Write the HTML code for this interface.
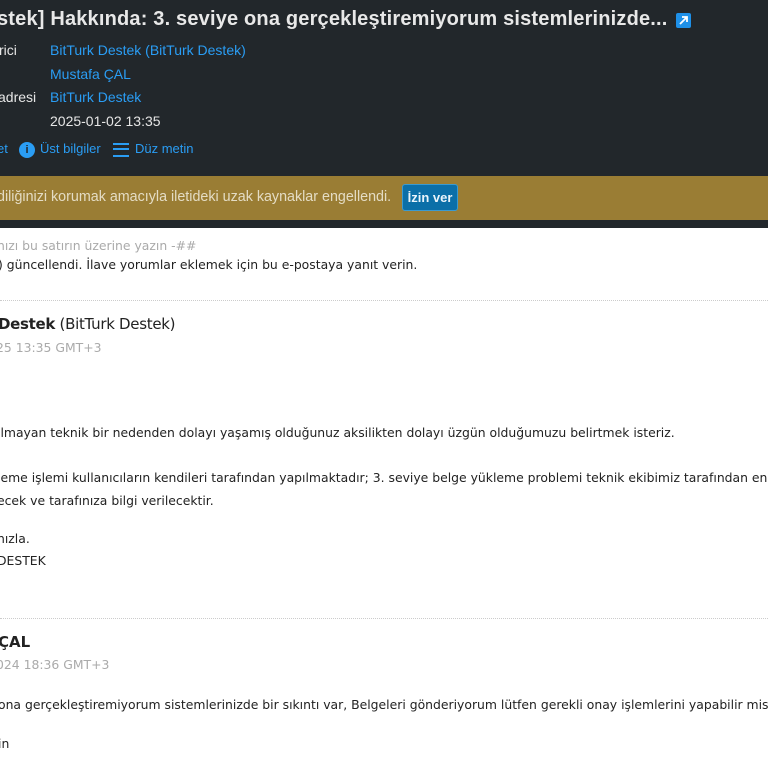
<!DOCTYPE html>
<html><head><meta charset="utf-8"><style>
*{margin:0;padding:0;box-sizing:border-box}
body{width:768px;height:768px;overflow:hidden;background:#fff;position:relative;font-family:"Liberation Sans",sans-serif}
.hd{position:absolute;left:0;top:0;width:768px;height:228px;background:#22272b}
.t{position:absolute;white-space:nowrap}
.ban{position:absolute;left:0;top:176px;width:768px;height:44px;background:#9a7d34}
.b{font-family:"DejaVu Sans",sans-serif;font-size:12.4px;color:#222}
.g{color:#aaa}
.hr{position:absolute;left:0;width:768px;border-top:1px dotted #ccc}
.lnk{color:#2a9df4;font-size:14px}
.w{color:#e6e6e6;font-size:14px}
</style></head><body>
<div class="hd"></div>
<div class="t" style="left:-3px;top:8px;font-size:20px;font-weight:bold;color:#e8e8e8;letter-spacing:0.18px">stek] Hakkında: 3. seviye ona gerçekleştiremiyorum sistemlerinizde...</div>
<div style="position:absolute;left:676px;top:13px;width:15px;height:15px;background:#1e90e8;border-radius:2px"><svg width="15" height="15"><path d="M4 11L11 4M6 4h5v5" stroke="#fff" stroke-width="1.8" fill="none"/></svg></div>
<div class="t w" style="left:-1px;top:42px">rici</div>
<div class="t lnk" style="left:50px;top:42px">BitTurk Destek (BitTurk Destek)</div>
<div class="t lnk" style="left:50px;top:66px">Mustafa ÇAL</div>
<div class="t w" style="left:-2px;top:89px">adresi</div>
<div class="t lnk" style="left:50px;top:89px">BitTurk Destek</div>
<div class="t w" style="left:50px;top:113px">2025-01-02 13:35</div>
<div class="t lnk" style="left:-3px;top:141px;font-size:13px">et</div>
<div style="position:absolute;left:19px;top:142px;width:16px;height:16px;border-radius:50%;background:#2a9df4;color:#22272b;font-size:11px;font-weight:bold;text-align:center;line-height:16px">i</div>
<div class="t lnk" style="left:40px;top:141px;font-size:13px">Üst bilgiler</div>
<div style="position:absolute;left:113px;top:143px;width:16px;height:14px;border-top:2px solid #2a9df4;border-bottom:2px solid #2a9df4"><div style="margin-top:3px;height:2px;background:#2a9df4"></div></div>
<div class="t lnk" style="left:135px;top:141px;font-size:13px">Düz metin</div>
<div class="ban"></div>
<div class="t" style="left:-3px;top:189px;font-size:14.3px;color:#e4dcc4">diliğinizi korumak amacıyla iletideki uzak kaynaklar engellendi.</div>
<div class="t" style="left:402px;top:184px;width:56px;height:27px;background:#0b6fa8;border:1px solid #3a9ad0;border-radius:3px;color:#eaf4fb;font-size:13px;font-weight:bold;text-align:center;line-height:25px">İzin ver</div>
<div class="t b g" style="left:-3px;top:238px">nızı bu satırın üzerine yazın -##</div>
<div class="t b" style="left:-2px;top:257px">) güncellendi. İlave yorumlar eklemek için bu e-postaya yanıt verin.</div>
<div class="hr" style="top:300px"></div>
<div class="t" style="left:-2px;top:315px;font-family:'DejaVu Sans',sans-serif;font-size:15px;color:#222;letter-spacing:-0.3px"><b>Destek</b> (BitTurk Destek)</div>
<div class="t b g" style="left:-4px;top:340px">25 13:35 GMT+3</div>
<div class="t b" style="left:-3px;top:425px">ilmayan teknik bir nedenden dolayı yaşamış olduğunuz aksilikten dolayı üzgün olduğumuzu belirtmek isteriz.</div>
<div class="t b" style="left:-3px;top:470px">leme işlemi kullanıcıların kendileri tarafından yapılmaktadır; 3. seviye belge yükleme problemi teknik ekibimiz tarafından en</div>
<div class="t b" style="left:-3px;top:493px">ecek ve tarafınıza bilgi verilecektir.</div>
<div class="t b" style="left:-3px;top:531px">nızla.</div>
<div class="t b" style="left:-3px;top:553px">DESTEK</div>
<div class="hr" style="top:618px"></div>
<div class="t" style="left:-2px;top:633px;font-family:'DejaVu Sans',sans-serif;font-size:15px;font-weight:bold;color:#222">ÇAL</div>
<div class="t b g" style="left:-4px;top:657px">024 18:36 GMT+3</div>
<div class="t b" style="left:-2px;top:697px">ona gerçekleştiremiyorum sistemlerinizde bir sıkıntı var, Belgeleri gönderiyorum lütfen gerekli onay işlemlerini yapabilir misi</div>
<div class="t b" style="left:-2px;top:736px">in</div>
</body></html>
